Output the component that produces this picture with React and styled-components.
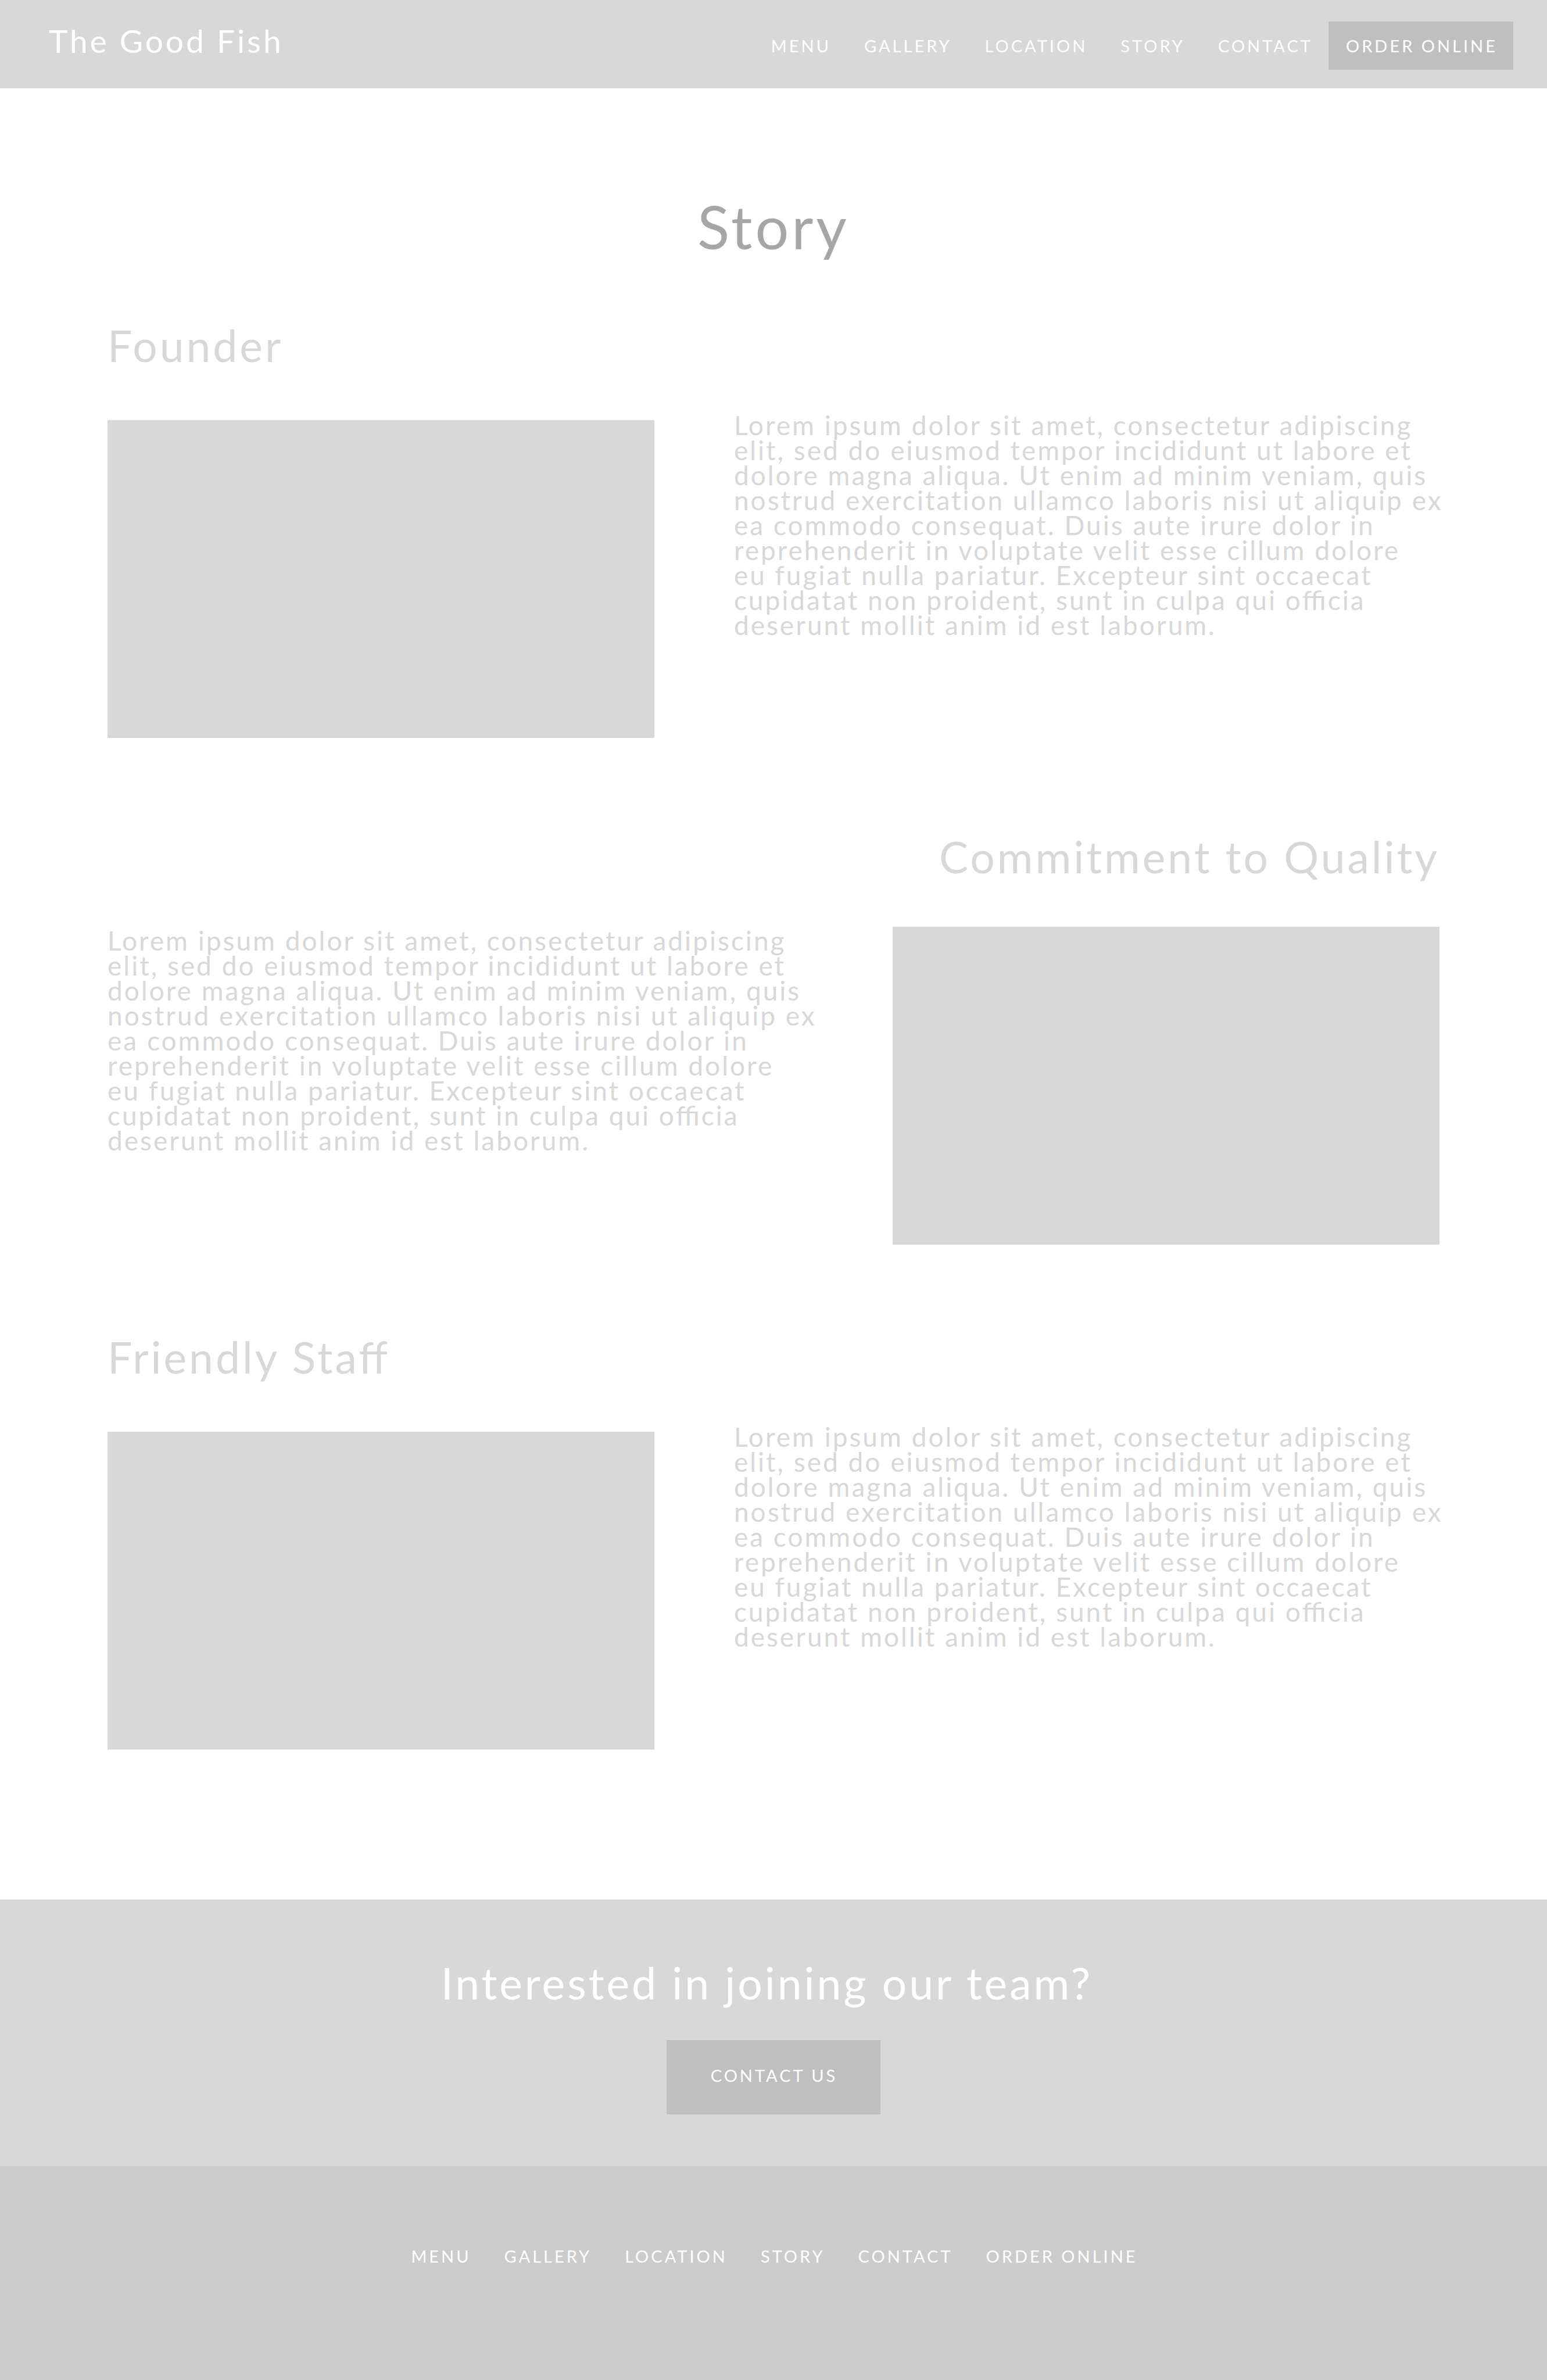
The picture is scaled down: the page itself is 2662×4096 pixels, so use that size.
import React from "react";
import styled, { createGlobalStyle } from "styled-components";

const color = {
  page: "#ffffff",
  panel: "#d8d8d8",
  button: "#bfbfbf",
  footer: "#cccccc",
  title: "#a6a6a6",
  light: "#ffffff",
};

const GlobalStyle = createGlobalStyle`
  * { box-sizing: border-box; margin: 0; padding: 0; }
  body {
    background: ${color.page};
    color: ${color.panel};
    font-family: Lato, "Open Sans", sans-serif;
  }
`;

const Header = styled.header`
  display: flex;
  justify-content: space-between;
  align-items: flex-start;
  padding: 37px 58px 32px 84px;
  background: ${color.panel};
`;

const Logo = styled.a`
  color: ${color.light};
  font-size: 55px;
  line-height: 66px;
  letter-spacing: 4px;
  text-decoration: none;
  white-space: nowrap;
`;

const NavList = styled.ul`
  display: flex;
  justify-content: center;
  list-style: none;
`;

const NavLink = styled.a`
  display: block;
  padding: ${(p) => (p.$bar ? "25px 27px 24px 30px" : "0 27px 0 30px")};
  background: ${(p) => (p.$filled ? color.button : "transparent")};
  color: ${color.light};
  font-size: 29px;
  line-height: 34px;
  letter-spacing: 4px;
  text-decoration: none;
  text-transform: uppercase;
  white-space: nowrap;
`;

const Main = styled.main`
  padding: 178px 185px 99px;
`;

const Title = styled.h1`
  margin-bottom: 99px;
  color: ${color.title};
  font-size: 102px;
  font-weight: 400;
  line-height: 120px;
  letter-spacing: 5px;
  text-align: center;
`;

const Heading = styled.h2`
  font-size: 75px;
  font-weight: 400;
  line-height: 90px;
  letter-spacing: 4px;
  font-feature-settings: "liga" 1;
`;

const Section = styled.section`
  display: flex;
  flex-direction: column;
  gap: ${(p) => (p.$flip ? 76 : 84)}px;
  margin-bottom: ${(p) => (p.$flip ? 148 : 159)}px;
  text-align: ${(p) => (p.$flip ? "right" : "left")};
`;

const Row = styled.div`
  display: grid;
  grid-template-columns: ${(p) =>
    p.$flip ? "minmax(0, 40fr) minmax(0, 31fr)" : "minmax(0, 31fr) minmax(0, 40fr)"};
  column-gap: 137px;
  align-items: start;
`;

const Photo = styled.div`
  order: ${(p) => (p.$flip ? 2 : 0)};
  aspect-ratio: 1018 / 592;
  background: ${color.panel};
`;

const Copy = styled.p`
  margin-top: ${(p) => (p.$flip ? 2 : -13)}px;
  font-size: 46px;
  line-height: 43px;
  letter-spacing: 3px;
  text-align: left;
  white-space: nowrap;
`;

const Ligature = styled.span`
  font-feature-settings: "liga" 1;
`;

const Join = styled.section`
  display: flex;
  flex-direction: column;
  align-items: center;
  gap: 54px;
  padding: 98px 0 89px;
  background: ${color.panel};
  color: ${color.light};
`;

const JoinButton = styled.button`
  padding: 44px 74px 50px 76px;
  border: 0;
  background: ${color.button};
  color: ${color.light};
  font-family: inherit;
  font-size: 29px;
  line-height: 34px;
  letter-spacing: 4px;
  text-transform: uppercase;
  cursor: pointer;
`;

const Footer = styled.footer`
  padding: 138px 0 197px;
  background: ${color.footer};
`;

const links = ["Menu", "Gallery", "Location", "Story", "Contact", "Order Online"];

const copyLines = [
  "Lorem ipsum dolor sit amet, consectetur adipiscing",
  "elit, sed do eiusmod tempor incididunt ut labore et",
  "dolore magna aliqua. Ut enim ad minim veniam, quis",
  "nostrud exercitation ullamco laboris nisi ut aliquip ex",
  "ea commodo consequat. Duis aute irure dolor in",
  "reprehenderit in voluptate velit esse cillum dolore",
  "eu fugiat nulla pariatur. Excepteur sint occaecat",
  "cupidatat non proident, sunt in culpa qui officia",
  "deserunt mollit anim id est laborum.",
];

const chapters = [
  { title: "Founder", flip: false },
  { title: "Commitment to Quality", flip: true },
  { title: "Friendly Staff", flip: false },
];

function Links({ bar }) {
  return (
    <NavList>
      {links.map((label) => (
        <li key={label}>
          <NavLink href="#" $bar={bar} $filled={bar && label === "Order Online"}>
            {label}
          </NavLink>
        </li>
      ))}
    </NavList>
  );
}

function Line({ text }) {
  return (
    <>
      {text
        .split(/(ffi)/)
        .map((part, i) => (part === "ffi" ? <Ligature key={i}>{part}</Ligature> : part))}
      <br />
    </>
  );
}

function Chapter({ title, flip }) {
  return (
    <Section $flip={flip}>
      <Heading>{title}</Heading>
      <Row $flip={flip}>
        <Photo $flip={flip} />
        <Copy $flip={flip}>
          {copyLines.map((line) => (
            <Line key={line} text={line} />
          ))}
        </Copy>
      </Row>
    </Section>
  );
}

export default function App() {
  return (
    <>
      <GlobalStyle />
      <Header>
        <Logo href="#">The Good Fish</Logo>
        <nav aria-label="Main">
          <Links bar />
        </nav>
      </Header>
      <Main>
        <Title>Story</Title>
        {chapters.map((c) => (
          <Chapter key={c.title} {...c} />
        ))}
      </Main>
      <Join>
        <Heading>Interested in joining our team?&nbsp;</Heading>
        <JoinButton type="button">Contact us</JoinButton>
      </Join>
      <Footer>
        <nav aria-label="Footer">
          <Links />
        </nav>
      </Footer>
    </>
  );
}
